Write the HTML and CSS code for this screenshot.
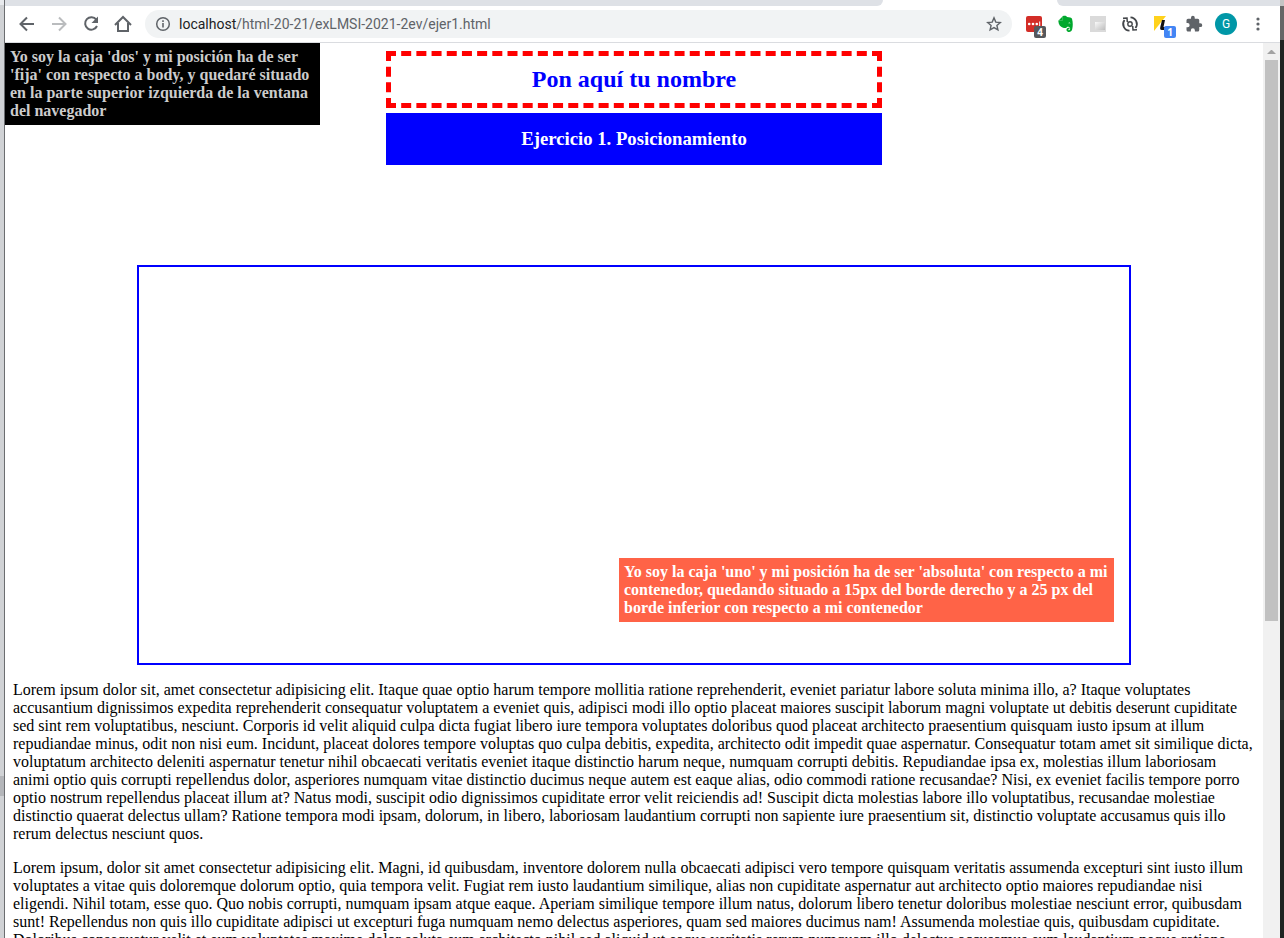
FILE: index.html
```html
<!DOCTYPE html>
<html lang="es">
<head>
<meta charset="utf-8">
<title>Ejercicio 1</title>
<link rel="stylesheet" href="styles.css">
</head>
<body>
<div class="desktop">
  <div class="edge-left"></div>
  <div class="browser">
    <div class="tabstrip"><span class="tab-rest"></span><span class="tab-active"></span><span class="tab-free"></span></div>
    <div class="toolbar">
      <nav class="tools" aria-label="Navegación">
        <button class="tool" aria-label="Atrás"><svg width="20" height="20" viewBox="0 0 20 20" fill="none" stroke="#5f6368" stroke-width="2"><path d="M17 10H4M10 3.500L3.500 10l6.500 6.500"/></svg></button>
        <button class="tool" aria-label="Adelante"><svg width="20" height="20" viewBox="0 0 20 20" fill="none" stroke="#babcbe" stroke-width="2"><path d="M3 10h13M10 3.500l6.500 6.500-6.500 6.500"/></svg></button>
        <button class="tool" aria-label="Recargar"><svg width="20" height="20" viewBox="0 0 20 20"><path d="M15.300 5.700A6.200 6.200 0 1 0 16 12" fill="none" stroke="#5f6368" stroke-width="2"/><path d="M17 2.500V9h-6.500z" fill="#5f6368"/></svg></button>
        <button class="tool" aria-label="Inicio"><svg width="20" height="20" viewBox="0 0 20 20" fill="none" stroke="#5f6368" stroke-width="2"><path d="M2 11L10 3l8 8M5 9v8h10V9"/></svg></button>
      </nav>
      <div class="omnibox">
        <svg width="16" height="16" viewBox="0 0 16 16"><circle cx="8" cy="8" r="6.300" fill="none" stroke="#5f6368" stroke-width="1.500"/><path d="M7.200 7h1.600v4.500H7.200zM7.200 4.300h1.600v1.600H7.200z" fill="#5f6368"/></svg>
        <a class="url" href="#"><span class="host">localhost</span>/html-20-21/exLMSI-2021-2ev/ejer1.html</a>
        <button class="star" aria-label="Añadir a marcadores"><svg width="16" height="16" viewBox="0 0 16 16" fill="none" stroke="#5f6368" stroke-width="1.400"><path d="M8 1.900l1.800 4.200 4.500.4-3.400 3 1 4.400L8 11.600l-3.900 2.300 1-4.400-3.400-3 4.500-.4z"/></svg></button>
      </div>
      <div class="tools">
        <button class="tool" aria-label="Extensión LastPass"><svg width="18" height="18" viewBox="0 0 18 18"><rect x="1" y="1" width="16" height="16" rx="2" fill="#d32d27"/><g fill="#fff"><circle cx="4.200" cy="9" r="1.300"/><circle cx="8" cy="9" r="1.300"/><circle cx="11.800" cy="9" r="1.300"/><path d="M14.200 6.500h1v5h-1z"/></g></svg><span class="badge badge-dark">4</span></button>
        <button class="tool" aria-label="Extensión Evernote"><svg width="18" height="18" viewBox="0 0 18 18"><path d="M6 1C8 .5 9.500.9 10 2c2.500.1 4.500.5 5 1.800 1 3.400 1 7.500.2 10.500-.5 2.200-2.200 3-4 2.600-2.200-.5-2.400-3.900.2-4.100h1.100v1.400h-1c-.5.500-.2 1 .5 1 1.200 0 1.300-1.200 1-2.200-.4-1-1.500-1.400-2.700-1.200-.8 1.500-2.600 1.300-4.300.9C3.300 12 1.600 9.700 1.300 5.800L6 1z" fill="#00a82d"/><path d="M2 5.500h3.600V1.700" fill="none" stroke="#5cc878" stroke-width=".6"/><path d="M11.300 8.400c.3-1.400 1.900-1.300 2.200.2-.8-.3-1.500-.3-2.200-.2z" fill="#fff"/></svg></button>
        <button class="tool" aria-label="Extensión desactivada"><svg width="16" height="16" viewBox="0 0 16 16"><defs><linearGradient id="g" x1="0" y1="0" x2="1" y2="1"><stop stop-color="#fafafa"/><stop offset="1" stop-color="#bdbdbd"/></linearGradient></defs><path d="M0 0h16v16H0z" fill="#dadada"/><path d="M5 6h10v8H5z" fill="url(#g)"/></svg></button>
        <button class="tool" aria-label="Extensión de actualización"><svg width="18" height="18" viewBox="0 0 18 18" fill="none" stroke="#43464a" stroke-width="1.800"><path d="M9.500 2.300A6.700 6.700 0 0 1 14.500 13M8.500 15.700A6.700 6.700 0 0 1 3.500 5"/><path d="M2 3.200l4-.2.300 4M16 14.800l-4 .2-.3-4" stroke-width="1.500"/><circle cx="9" cy="9" r="2.200" stroke-width="1.400"/></svg></button>
        <button class="tool" aria-label="Extensión de notas"><svg width="18" height="18" viewBox="0 0 18 18"><path d="M1 1h12L1 16z" fill="#ffd21c"/><path d="M9 5h3l-1.500 7H12v3H9c-2 0-2-1-1.700-3z" fill="#111"/></svg><span class="badge badge-blue">1</span></button>
        <button class="tool" aria-label="Extensiones"><svg width="18" height="18" viewBox="0 0 24 24"><path d="M20.500 11H19V7a2 2 0 0 0-2-2h-4V3.500a2.500 2.500 0 0 0-5 0V5H4a2 2 0 0 0-2 2v3.800h1.500a2.700 2.700 0 0 1 0 5.400H2V20c0 1.100.9 2 2 2h3.800v-1.500a2.700 2.700 0 0 1 5.400 0V22H17a2 2 0 0 0 2-2v-4h1.500a2.500 2.500 0 0 0 0-5z" fill="#5f6368"/></svg></button>
        <button class="tool" aria-label="Perfil"><span class="avatar">G</span></button>
        <button class="tool" aria-label="Menú"><svg width="16" height="16" viewBox="0 0 16 16" fill="#5f6368"><circle cx="8" cy="3" r="1.600"/><circle cx="8" cy="8" r="1.600"/><circle cx="8" cy="13" r="1.600"/></svg></button>
      </div>
    </div>
    <div class="viewport">
      <main class="page">
        <div class="dos">Yo soy la caja 'dos' y mi posición ha de ser 'fija' con respecto a body, y quedaré situado en la parte superior izquierda de la ventana del navegador</div>
        <header class="heading">
          <h1 class="name">Pon aquí tu nombre</h1>
          <h3 class="exercise">Ejercicio 1. Posicionamiento</h3>
        </header>
        <section class="container">
          <div class="uno">Yo soy la caja 'uno' y mi posición ha de ser 'absoluta' con respecto a mi contenedor, quedando situado a 15px del borde derecho y a 25 px del borde inferior con respecto a mi contenedor</div>
        </section>
        <p class="text">Lorem ipsum dolor sit, amet consectetur adipisicing elit. Itaque quae optio harum tempore mollitia ratione reprehenderit, eveniet pariatur labore soluta minima illo, a? Itaque voluptates accusantium dignissimos expedita reprehenderit consequatur voluptatem a eveniet quis, adipisci modi illo optio placeat maiores suscipit laborum magni voluptate ut debitis deserunt cupiditate sed sint rem voluptatibus, nesciunt. Corporis id velit aliquid culpa dicta fugiat libero iure tempora voluptates doloribus quod placeat architecto praesentium quisquam iusto ipsum at illum repudiandae minus, odit non nisi eum. Incidunt, placeat dolores tempore voluptas quo culpa debitis, expedita, architecto odit impedit quae aspernatur. Consequatur totam amet sit similique dicta, voluptatum architecto deleniti aspernatur tenetur nihil obcaecati veritatis eveniet itaque distinctio harum neque, numquam corrupti debitis. Repudiandae ipsa ex, molestias illum laboriosam animi optio quis corrupti repellendus dolor, asperiores numquam vitae distinctio ducimus neque autem est eaque alias, odio commodi ratione recusandae? Nisi, ex eveniet facilis tempore porro optio nostrum repellendus placeat illum at? Natus modi, suscipit odio dignissimos cupiditate error velit reiciendis ad! Suscipit dicta molestias labore illo voluptatibus, recusandae molestiae distinctio quaerat delectus ullam? Ratione tempora modi ipsam, dolorum, in libero, laboriosam laudantium corrupti non sapiente iure praesentium sit, distinctio voluptate accusamus quis illo rerum delectus nesciunt quos.</p>
        <p class="text">Lorem ipsum, dolor sit amet consectetur adipisicing elit. Magni, id quibusdam, inventore dolorem nulla obcaecati adipisci vero tempore quisquam veritatis assumenda excepturi sint iusto illum voluptates a vitae quis doloremque dolorum optio, quia tempora velit. Fugiat rem iusto laudantium similique, alias non cupiditate aspernatur aut architecto optio maiores repudiandae nisi eligendi. Nihil totam, esse quo. Quo nobis corrupti, numquam ipsam atque eaque. Aperiam similique tempore illum natus, dolorum libero tenetur doloribus molestiae nesciunt error, quibusdam sunt! Repellendus non quis illo cupiditate adipisci ut excepturi fuga numquam nemo delectus asperiores, quam sed maiores ducimus nam! Assumenda molestiae quis, quibusdam cupiditate. Doloribus consequatur velit et eum voluptates maxime dolor soluta eum architecto nihil sed aliquid ut eaque veritatis rerum numquam illo delectus accusamus eum laudantium neque ratione suscipit.</p>
      </main>
      <div class="scrollbar" aria-hidden="true"><span class="arrow"></span><span class="thumb"></span></div>
    </div>
  </div>
  <div class="edge-right"></div>
</div>
</body>
</html>
```
FILE: styles.css
```css
* { box-sizing: border-box; }
body { margin: 0; font-family: "Liberation Serif", "Times New Roman", serif; font-size: 16px; line-height: 18px; color: #000; }
button { border: 0; padding: 0; background: none; font: inherit; }
svg { display: block; }

.desktop { display: flex; height: 100vh; overflow: hidden; background: #fff; }
.edge-left { width: 5px; border-right: 1px solid #6b6d70; background: linear-gradient(#e8eaed 5px, #d0d2d5 5px, #d0d2d5 776px, #b4b6ba 776px, #b4b6ba 796px, #d0d2d5 796px); }
.edge-right { width: 4px; background: linear-gradient(#c4c4c4 6px, #666 6px, #666 40px, #1f2321 40px, #1f2321 700px, #303432 700px, #303432 720px, #1f2321 720px); }
.browser { flex: 1; min-width: 0; display: flex; flex-direction: column; }

/* Browser chrome */
.tabstrip { display: flex; height: 6px; flex: none; }
.tab-rest { flex: 878; background: #dee1e6; border-bottom-right-radius: 6px; }
.tab-active { flex: 174; }
.tab-free { flex: 223; background: #dee1e6; border-bottom-left-radius: 6px; }
.toolbar { display: flex; flex: none; align-items: center; gap: 6px; height: 37px; padding: 0 6px; border-bottom: 1px solid #dadce0; }
.tools { display: flex; }
.tool { position: relative; display: flex; align-items: center; justify-content: center; width: 32px; height: 28px; }
.omnibox { flex: 1; display: flex; align-items: center; gap: 8px; height: 28px; padding: 0 10px; border-radius: 14px; background: #f1f3f4; }
.url { flex: 1; font: 14px/20px Roboto, sans-serif; color: #5f6368; text-decoration: none; }
.host { color: #202124; }
.badge { position: absolute; right: 4px; bottom: 0; width: 12px; height: 12px; border-radius: 2px; font: bold 10px/12px "Open Sans", sans-serif; color: #fff; text-align: center; }
.badge-dark { background: #55585c; }
.badge-blue { background: #4285f4; right: 2px; }
.avatar { width: 22px; height: 22px; border-radius: 50%; background: #0097a7; color: #fff; font: 12px/22px Roboto, sans-serif; text-align: center; }

/* Page area with its scrollbar */
.viewport { flex: 1; min-height: 0; display: flex; }
.page { position: relative; flex: 1; min-width: 0; overflow: hidden; padding: 8px; }
.scrollbar { flex: none; width: 17px; padding: 0 2px; background: #f1f1f1; }
.arrow { display: block; height: 17px; background: #a3a3a3; clip-path: polygon(2px 11px, 6px 7px, 7px 7px, 11px 11px); }
.thumb { display: block; height: 62.7%; background: #c1c1c1; }

.dos { position: absolute; top: 0; left: 0; width: 25%; padding: 5px; background: #000; color: #ccc; font-weight: bold; }
.heading { display: flex; flex-direction: column; gap: 5px; width: 40%; margin: 0 auto 100px; text-align: center; }
.name { margin: 0; padding: 10px; border: 5px dashed #f00; font-size: 24px; line-height: 27px; color: #00f; }
.exercise { margin: 0; padding: 15px; background: #00f; color: #fff; line-height: 22px; }
.container { position: relative; width: 80%; height: 400px; margin: 0 auto; border: 2px solid #00f; }
.uno { position: absolute; right: 15px; bottom: 41px; width: 50%; padding: 5px; background: #ff6347; color: #fff; font-weight: bold; }
.text { margin: 16px 0; }
```
